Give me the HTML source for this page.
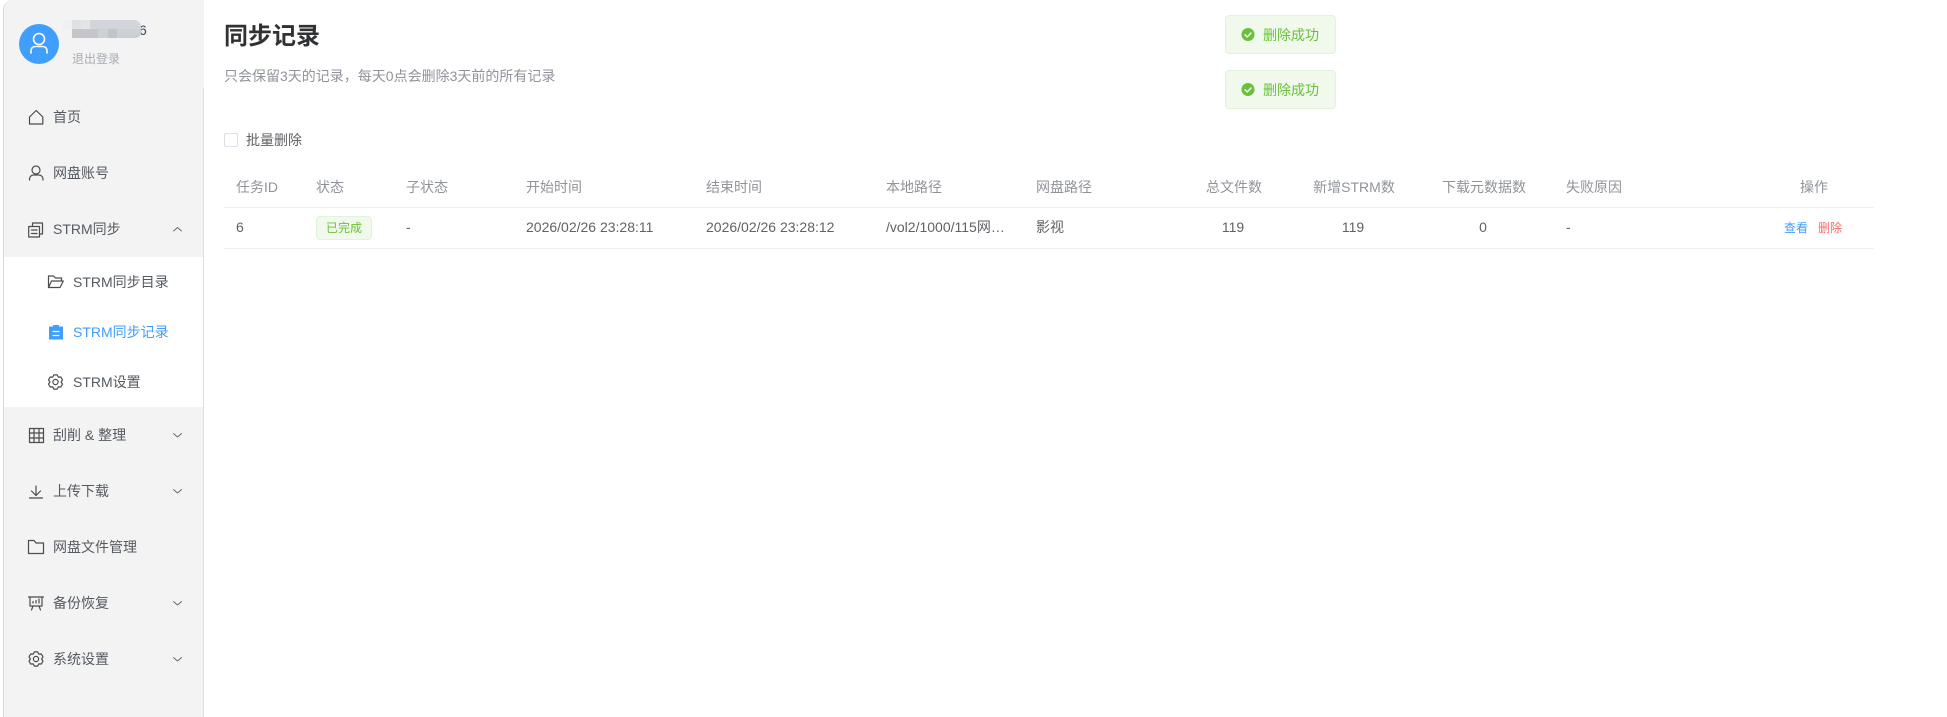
<!DOCTYPE html>
<html lang="zh">
<head>
<meta charset="utf-8">
<title>同步记录</title>
<style>
html,body{margin:0;padding:0;width:1947px;height:717px;overflow:hidden;background:#fff;}
body{position:relative;font-family:"Liberation Sans","Noto Sans CJK SC",sans-serif;font-size:14px;color:#606266;}
.t{position:absolute;line-height:20px;height:20px;white-space:nowrap;}
.c{transform:translateX(-50%);}
.h{color:#909399;}
.n{color:#555a61;}
.box{position:absolute;box-sizing:border-box;}
svg{position:absolute;left:0;top:0;}
</style>
</head>
<body>
<!-- sidebar -->
<div class="box" style="left:3px;top:0;width:201px;height:717px;background:#f3f3f4;border-left:1px solid #d4d7de;border-top-left-radius:10px;"></div>
<div class="box" style="left:203px;top:88px;width:1px;height:629px;background:#dcdfe6;"></div>
<div class="box" style="left:4px;top:257px;width:199px;height:150px;background:#fff;"></div>

<!-- avatar name mosaic -->
<div class="t" style="left:139px;top:20px;color:#3b4a66;">6</div>
<div class="box" style="left:63px;top:20px;width:9px;height:9px;background:#eef0f1;"></div>
<div class="box" style="left:72px;top:20px;width:9px;height:9px;background:#dfe1e4;"></div>
<div class="box" style="left:81px;top:20px;width:9px;height:9px;background:#e2e4e6;"></div>
<div class="box" style="left:90px;top:20px;width:51px;height:9px;background:#d2d5d9;border-top-right-radius:7px;"></div>
<div class="box" style="left:72px;top:29px;width:26px;height:9px;background:#c4c6c9;"></div>
<div class="box" style="left:98px;top:29px;width:10px;height:9px;background:#ced1d4;"></div>
<div class="box" style="left:108px;top:29px;width:9px;height:9px;background:#c2c4c7;"></div>
<div class="box" style="left:117px;top:29px;width:24px;height:9px;background:#ccd0d5;border-bottom-right-radius:5px;"></div>
<div class="t" style="left:72px;top:49px;font-size:12px;color:#a8abb2;">退出登录</div>

<!-- nav text -->
<div class="t n" style="left:53px;top:107px;">首页</div>
<div class="t n" style="left:53px;top:163px;">网盘账号</div>
<div class="t n" style="left:53px;top:219px;">STRM同步</div>
<div class="t n" style="left:73px;top:272px;">STRM同步目录</div>
<div class="t" style="left:73px;top:322px;color:#409eff;">STRM同步记录</div>
<div class="t n" style="left:73px;top:372px;">STRM设置</div>
<div class="t n" style="left:53px;top:425px;">刮削 &amp; 整理</div>
<div class="t n" style="left:53px;top:481px;">上传下载</div>
<div class="t n" style="left:53px;top:537px;">网盘文件管理</div>
<div class="t n" style="left:53px;top:593px;">备份恢复</div>
<div class="t n" style="left:53px;top:649px;">系统设置</div>

<!-- icons -->
<svg width="1947" height="717" viewBox="0 0 1947 717" fill="none" stroke="#4c4c4c" stroke-width="1.200" stroke-linejoin="round" stroke-linecap="round">
  <!-- avatar -->
  <circle cx="39" cy="44" r="20" fill="#409eff" stroke="none"/>
  <circle cx="39" cy="39" r="5.500" stroke="#fff" stroke-width="1.600"/>
  <path d="M31 53v-2.500a4 4 0 0 1 4-4h8a4 4 0 0 1 4 4v2.500" stroke="#fff" stroke-width="1.600"/>
  <!-- home -->
  <path d="M29.500 117L36.200 110.500L42.800 117V124H29.500Z"/>
  <!-- user -->
  <circle cx="36" cy="170" r="4"/>
  <path d="M29.500 180v-1a4 4 0 0 1 4-4h5.500a4 4 0 0 1 4 4v1"/>
  <!-- doc stack -->
  <path d="M28.700 226.500h10.800v10.500H28.700zM32.500 226.500v-3.500h10v11h-3M31.500 230h5.500M31.500 233.500h5.500"/>
  <path d="M173.500 231l4-3.500 4 3.500" stroke-width=".9" stroke="#666"/>
  <!-- folder open -->
  <path d="M48.500 287.500V276h5l2 2h6v3M48.500 287.500h11.500l3.300-6.500H51.500l-3 6.500"/>
  <!-- clipboard active -->
  <path d="M49.500 327h13v12h-13z" fill="#409eff" stroke="#409eff" stroke-width="1"/>
  <path d="M53.500 325.500h5v2h-5z" fill="#409eff" stroke="#409eff" stroke-width="1"/>
  <path d="M53 331.500h6M53 335.500h6" stroke="#fff" stroke-width="1.300"/>
  <!-- gear sub -->
  <g transform="translate(55.500 382)">
    <path d="M-1.640-7.110L1.640-7.110L2.800-4.850L5.340-4.980L6.980-2.130L5.600 0L6.980 2.130L5.340 4.980L2.800 4.850L1.640 7.110L-1.640 7.110L-2.800 4.850L-5.340 4.980L-6.980 2.130L-5.600 0L-6.980-2.130L-5.340-4.980L-2.800-4.850Z"/>
    <circle r="2.600"/>
  </g>
  <!-- film grid -->
  <path d="M29.500 428.500h14v14h-14zM29.500 433h14M29.500 438h14M34 428.500v14M39 428.500v14"/>
  <path d="M173.500 433.500l4 3.500 4-3.500" stroke-width=".9" stroke="#666"/>
  <!-- download -->
  <path d="M36 486v9M31.500 491l4.500 4.500 4.500-4.500M29.500 498h13"/>
  <path d="M173.500 489.500l4 3.500 4-3.500" stroke-width=".9" stroke="#666"/>
  <!-- folder -->
  <path d="M28.500 553.500v-13h5.500l2 2.500h7.500v10.500z"/>
  <!-- presentation -->
  <path d="M28.500 597h15M30 597v9h12v-9M33 606l-1.500 4M39 606l1.500 4M33 603v-1.500M36 603v-2.500M39 603v-4"/>
  <path d="M173.500 601.500l4 3.500 4-3.500" stroke-width=".9" stroke="#666"/>
  <!-- gear nav -->
  <g transform="translate(36 659)">
    <path d="M-1.640-7.110L1.640-7.110L2.800-4.850L5.340-4.980L6.980-2.130L5.600 0L6.980 2.130L5.340 4.980L2.800 4.850L1.640 7.110L-1.640 7.110L-2.800 4.850L-5.340 4.980L-6.980 2.130L-5.600 0L-6.980-2.130L-5.340-4.980L-2.800-4.850Z"/>
    <circle r="2.600"/>
  </g>
  <path d="M173.500 657.500l4 3.500 4-3.500" stroke-width=".9" stroke="#666"/>
</svg>

<!-- header -->
<div class="t" style="left:224px;top:20px;height:34px;line-height:34px;font-size:24px;font-weight:700;color:#303133;">同步记录</div>
<div class="t" style="left:224px;top:66px;color:#909399;">只会保留3天的记录，每天0点会删除3天前的所有记录</div>

<!-- checkbox -->
<div class="box" style="left:224px;top:133px;width:14px;height:14px;border:1px solid #dcdfe6;border-radius:2px;background:#fff;"></div>
<div class="t" style="left:246px;top:130px;">批量删除</div>

<!-- table head -->
<div class="t h" style="left:236px;top:177px;">任务ID</div>
<div class="t h" style="left:316px;top:177px;">状态</div>
<div class="t h" style="left:406px;top:177px;">子状态</div>
<div class="t h" style="left:526px;top:177px;">开始时间</div>
<div class="t h" style="left:706px;top:177px;">结束时间</div>
<div class="t h" style="left:886px;top:177px;">本地路径</div>
<div class="t h" style="left:1036px;top:177px;">网盘路径</div>
<div class="t h c" style="left:1234px;top:177px;">总文件数</div>
<div class="t h c" style="left:1354px;top:177px;">新增STRM数</div>
<div class="t h c" style="left:1484px;top:177px;">下载元数据数</div>
<div class="t h" style="left:1566px;top:177px;">失败原因</div>
<div class="t h c" style="left:1814px;top:177px;">操作</div>
<div class="box" style="left:224px;top:207px;width:1650px;height:1px;background:#ebeef5;"></div>

<!-- row -->
<div class="t" style="left:236px;top:217px;">6</div>
<div class="box" style="left:316px;top:216px;width:56px;height:24px;background:#f0f9eb;border:1px solid #e1f3d8;border-radius:4px;color:#67c23a;font-size:12px;line-height:22px;text-align:center;">已完成</div>
<div class="t" style="left:406px;top:217px;">-</div>
<div class="t" style="left:526px;top:217px;">2026/02/26 23:28:11</div>
<div class="t" style="left:706px;top:217px;">2026/02/26 23:28:12</div>
<div class="t" style="left:886px;top:217px;">/vol2/1000/115网…</div>
<div class="t" style="left:1036px;top:217px;">影视</div>
<div class="t c" style="left:1233px;top:217px;">119</div>
<div class="t c" style="left:1353px;top:217px;">119</div>
<div class="t c" style="left:1483px;top:217px;">0</div>
<div class="t" style="left:1566px;top:217px;">-</div>
<div class="t" style="left:1784px;top:218px;font-size:12px;color:#409eff;">查看</div>
<div class="t" style="left:1818px;top:218px;font-size:12px;color:#f56c6c;">删除</div>
<div class="box" style="left:224px;top:248px;width:1650px;height:1px;background:#ebeef5;"></div>

<!-- toasts -->
<div class="box" style="left:1225px;top:15px;width:111px;height:39px;background:#f0f9eb;border:1px solid #e1f3d8;border-radius:4px;"></div>
<div class="t" style="left:1263px;top:25px;color:#67c23a;">删除成功</div>
<div class="box" style="left:1225px;top:70px;width:111px;height:39px;background:#f0f9eb;border:1px solid #e1f3d8;border-radius:4px;"></div>
<div class="t" style="left:1263px;top:80px;color:#67c23a;">删除成功</div>
<svg width="1947" height="717" viewBox="0 0 1947 717" fill="none">
  <circle cx="1248" cy="34.500" r="6.500" fill="#67c23a"/>
  <path d="M1245 34.800l2.200 2.200 3.800-4" stroke="#fff" stroke-width="1.400" stroke-linecap="round" stroke-linejoin="round"/>
  <circle cx="1248" cy="89.500" r="6.500" fill="#67c23a"/>
  <path d="M1245 89.800l2.200 2.200 3.800-4" stroke="#fff" stroke-width="1.400" stroke-linecap="round" stroke-linejoin="round"/>
</svg>
</body>
</html>
